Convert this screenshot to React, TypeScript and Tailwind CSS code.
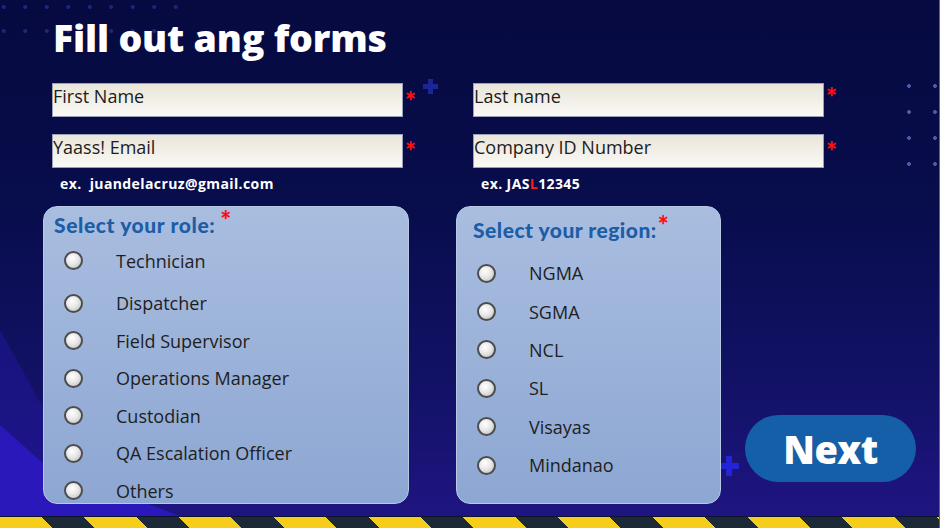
import React from "react";

const roles = [
  "Technician",
  "Dispatcher",
  "Field Supervisor",
  "Operations Manager",
  "Custodian",
  "QA Escalation Officer",
  "Others",
];

const regions = ["NGMA", "SGMA", "NCL", "SL", "Visayas", "Mindanao"];

function Field({ label, starClass }: { label: string; starClass: string }) {
  return (
    <div className="flex items-start">
      <div className="w-[351px] h-[34px] border border-[#9aa0b8] bg-[linear-gradient(to_bottom,#e9e5d9,#faf9f5)] text-[18px] leading-6 text-[#1c1c1c] font-['Open_Sans',sans-serif]">
        {label}
      </div>
      <span className={`text-[#ff1010] font-black text-[26px] leading-none ml-[2px] font-['Lato',sans-serif] ${starClass}`}>*</span>
    </div>
  );
}

function Radio({ label, rowClass }: { label: string; rowClass: string }) {
  return (
    <div className={`flex items-center ${rowClass}`}>
      <span className="w-[19px] h-[19px] rounded-full border-2 border-[#4d4d4d] bg-[radial-gradient(circle_at_40%_35%,#ffffff_0%,#e8e8e8_45%,#b8b8b8_100%)] shrink-0" />
      <span className="ml-[33px] text-[18px] leading-6 text-[#1e1e1e] font-['Open_Sans',sans-serif]">{label}</span>
    </div>
  );
}

export default function App() {
  return (
    <div className="relative w-[940px] h-[528px] overflow-hidden bg-[linear-gradient(to_bottom,#060a40_0%,#080d4c_40%,#131268_75%,#201584_100%)] border-r border-[#5a6090]">
      {/* lower-left glow */}
      <div className="absolute inset-0 bg-[#1f1594] [clip-path:polygon(0_330px,50px_420px,50px_516px,0_516px)] opacity-60" />
      <div className="absolute inset-0 bg-[#2b18ba] [clip-path:polygon(0_425px,45px_465px,180px_516px,0_516px)]" />

      {/* dot grids */}
      <div className="absolute left-0 top-0 w-[190px] h-[40px] bg-[radial-gradient(circle,#1c267f_1.6px,transparent_2.2px)] bg-[size:21.5px_24px] bg-[position:-7px_-5px]" />
      <div className="absolute left-[898px] top-[73px] w-[42px] h-[104px] bg-[radial-gradient(circle,#4b5aa6_1.6px,transparent_2.2px)] bg-[size:26px_26px] bg-[position:-2px_0px]" />

      {/* plus marks */}
      <div className="absolute left-[423px] top-[79px] w-[15px] h-[15px]">
        <div className="absolute left-[5px] top-0 w-[5px] h-[15px] bg-[#1b2596]" />
        <div className="absolute left-0 top-[5px] w-[15px] h-[5px] bg-[#1b2596]" />
      </div>
      <div className="absolute left-[719px] top-[456px] w-[20px] h-[20px]">
        <div className="absolute left-[7px] top-0 w-[6px] h-[20px] bg-[#2424d6]" />
        <div className="absolute left-0 top-[7px] w-[20px] h-[6px] bg-[#2424d6]" />
      </div>

      <div className="relative flex flex-col h-full">
        <h1 className="ml-[53px] mt-[16px] text-[37.5px] leading-[44px] font-extrabold text-white font-['Open_Sans',sans-serif] tracking-[-0.2px]">
          Fill out ang forms
        </h1>

        <div className="flex ml-[52px] mt-[23px]">
          <div className="w-[421px] flex flex-col">
            <Field label="First Name" starClass="mt-[5px]" />
            <div className="mt-[17px]">
              <Field label="Yaass! Email" starClass="mt-[4px]" />
            </div>
            <p className="ml-[8px] mt-[7px] text-[14px] leading-[18px] font-bold text-white font-['Open_Sans',sans-serif] tracking-[0.4px]">
              ex.&nbsp; juandelacruz@gmail.com
            </p>
          </div>
          <div className="flex flex-col">
            <Field label="Last name" starClass="mt-[1px]" />
            <div className="mt-[17px]">
              <Field label="Company ID Number" starClass="mt-[4px]" />
            </div>
            <p className="ml-[8px] mt-[7px] text-[14px] leading-[18px] font-bold text-white font-['Open_Sans',sans-serif] tracking-[0.4px]">
              ex. JAS<span className="text-[#ff1a1a]">L</span>12345
            </p>
          </div>
        </div>

        <div className="flex items-end ml-[43px] mt-[13px]">
          <div className="w-[366px] h-[298px] rounded-[14px] border border-[#b8c9e6] bg-[linear-gradient(to_bottom,#a9bddf,#8da7d3)] pl-[20px] pt-[4px]">
            <div className="flex items-start -ml-[10px] h-[28px]">
              <span className="text-[21px] leading-[28px] font-black text-[#1c5da7] font-['Lato',sans-serif] tracking-[0.6px]">Select your role:</span>
              <span className="ml-[5px] -mt-[4px] text-[#ff1010] font-black text-[26px] leading-none font-['Lato',sans-serif]">*</span>
            </div>
            <div className="flex flex-col mt-[3px]">
              {roles.map((r, i) => (
                <Radio key={r} label={r} rowClass={i === 0 ? "h-[37.5px] mb-[5px]" : "h-[37.5px]"} />
              ))}
            </div>
          </div>

          <div className="ml-[47px] w-[265px] h-[298px] rounded-[14px] border border-[#b8c9e6] bg-[linear-gradient(to_bottom,#a9bddf,#8da7d3)] pl-[20px] pt-[9px]">
            <div className="flex items-start -ml-[4px] h-[28px]">
              <span className="text-[21px] leading-[28px] font-black text-[#1c5da7] font-['Lato',sans-serif] tracking-[0.5px]">Select your region:</span>
              <span className="ml-[1px] -mt-[4px] text-[#ff1010] font-black text-[26px] leading-none font-['Lato',sans-serif]">*</span>
            </div>
            <div className="flex flex-col mt-[10px]">
              {regions.map((r) => (
                <Radio key={r} label={r} rowClass="h-[38.4px]" />
              ))}
            </div>
          </div>

          <button className="ml-[24px] mb-[22px] w-[171px] h-[67px] rounded-full bg-[#155fa9] text-white text-[38px] font-extrabold leading-none font-['Open_Sans',sans-serif] tracking-[-0.5px]">
            Next
          </button>
        </div>

        <div className="mt-auto h-[12px] border-t border-[#0d1230] bg-[repeating-linear-gradient(45deg,#f6cd1b_0px,#f6cd1b_37px,#1b2a36_37px,#1b2a36_67px)]" />
      </div>
    </div>
  );
}
